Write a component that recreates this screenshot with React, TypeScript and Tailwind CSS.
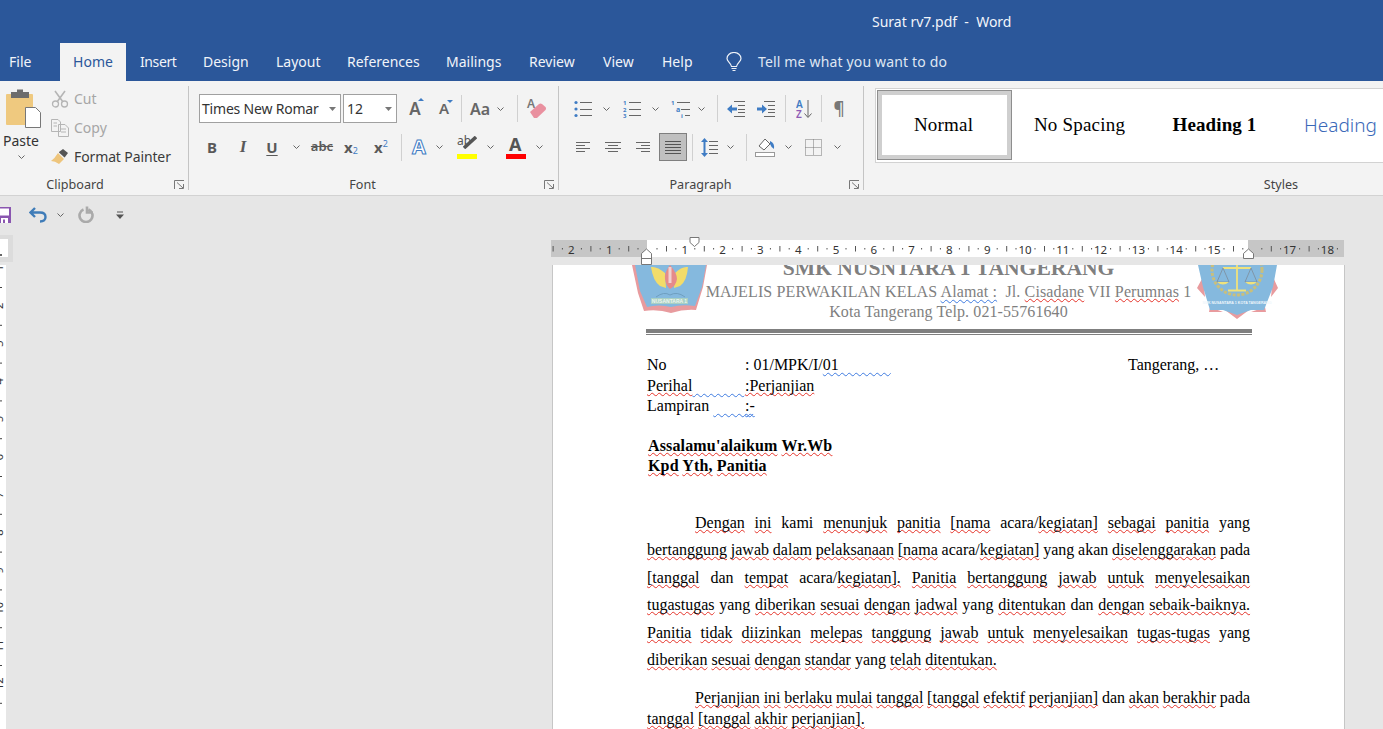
// App.tsx
import React from "react";

const RED = "underline decoration-wavy decoration-[#e5332a] decoration-[1.4px] underline-offset-[1px] [text-decoration-skip-ink:none]";
const BLUE = "underline decoration-wavy decoration-[#3f7be0] decoration-[1.4px] underline-offset-[2px] [text-decoration-skip-ink:none] whitespace-pre";

// the part of a word after ~ gets the red squiggle
function Words({ text }: { text: string }) {
  return (
    <>
      {text.split(" ").map((w, i) => {
        const at = w.indexOf("~");
        return (
          <React.Fragment key={i}>
            {i > 0 && " "}
            {at < 0 ? w : <>{w.slice(0, at)}<span className={RED}>{w.slice(at + 1)}</span></>}
          </React.Fragment>
        );
      })}
    </>
  );
}

const Chev = ({ className = "" }: { className?: string }) => (
  <svg width="9" height="6" viewBox="0 0 9 6" className={className}>
    <path d="M1.5 1.5 4.5 4.5 7.5 1.5" fill="none" stroke="#666" strokeWidth="1" />
  </svg>
);

const Sep = ({ className = "" }: { className?: string }) => (
  <div className={`h-[27px] w-px shrink-0 bg-[#d0d0d0] ${className}`} />
);

const Launcher = () => (
  <svg width="11" height="10" viewBox="0 0 11 10" className="absolute bottom-0 right-[3px]">
    <path d="M.5 9V.5H10M3 2.5 9 8M5 8.5H9.5V4" fill="none" stroke="#777" strokeWidth="1" />
  </svg>
);

function Group({ label, labelClass, className, children }: { label: string; labelClass: string; className: string; children: React.ReactNode }) {
  return (
    <div className={`relative flex h-[104px] shrink-0 flex-col border-r border-[#c4c4c4] ${className}`}>
      <div className="flex-1">{children}</div>
      <div className={`-mb-[4px] h-[18px] text-center text-[12.6px] leading-[18px] text-[#444] ${labelClass}`}>{label}</div>
    </div>
  );
}

const Lines = ({ d, w, h, color = "#666" }: { d: string; w: number; h: number; color?: string }) => (
  <svg width={w} height={h} viewBox={`0 0 ${w} ${h}`} className="shrink-0">
    <path d={d} fill="none" stroke={color} strokeWidth="1" />
  </svg>
);

function Ruler() {
  const nums = [-2, -1, 1, 2, 3, 4, 5, 6, 7, 8, 9, 10, 11, 12, 13, 14, 15, 17, 18];
  const o = 96; // x of ruler zero in this svg
  const step = 37.8;
  const ticks: React.ReactNode[] = [];
  for (let i = -3; i <= 19; i++) {
    const x = o + i * step;
    ticks.push(
      <g key={i} fill="#555">
        <rect x={x + 9.5} y={13} width={1} height={1.5} />
        <rect x={x + 19} y={11} width={1} height={5.5} />
        <rect x={x + 28.3} y={13} width={1} height={1.5} />
      </g>,
    );
  }
  return (
    <svg width="794" height="30" viewBox="0 0 794 30" className="block shrink-0">
      <rect x="0" y="5" width="793" height="17" fill="#c6c6c6" />
      <rect x="96" y="5" width="601" height="17" fill="#fff" />
      <clipPath id="rul">
        <rect x="0" y="5" width="793" height="17" />
      </clipPath>
      <g clipPath="url(#rul)">{ticks}</g>
      {nums.map((n) => (
        <text key={n} x={o + n * step} y={18.5} textAnchor="middle" fontSize="11.5" fontFamily="Noto Sans" fill="#333">
          {Math.abs(n)}
        </text>
      ))}
      <path d="M139 2.5H148V7.5L143.5 11.5 139 7.5Z" fill="#fff" stroke="#777" />
      <path d="M90.5 29.5V18.5L95.5 14 100.5 18.5V29.5ZM90.5 23.5H100.5" fill="#fff" stroke="#777" />
      <path d="M692.5 23.5V18.5L697.5 14 702.5 18.5V23.5Z" fill="#fff" stroke="#777" />
    </svg>
  );
}

function VRuler() {
  const n = [1, 2, 3, 4, 5, 6, 7, 8, 9, 10, 11, 12];
  return (
    <svg width="6" height="464" viewBox="0 0 6 464" className="block">
      {n.map((v, i) => (
        <g key={v}>
          <text x={0} y={0} transform={`translate(3 ${3 + i * 37.8}) rotate(-90)`} textAnchor="middle" fontSize="11" fontFamily="Noto Sans" fill="#333">
            {v}
          </text>
          <rect x="0" y={22 + i * 37.8} width="2" height="1" fill="#444" />
        </g>
      ))}
    </svg>
  );
}

const LogoLeft = () => (
  <svg width="78" height="50" viewBox="0 0 78 50" className="absolute left-[79px] top-0">
    <path d="M0 0H75L71 22 64 45Q52 44 39 48 26 44 12 46L6 28Z" fill="#e89b9e" />
    <path d="M3 0H74L70 22 63 41Q50 39 39 42 27 39 15 42L8 26Z" fill="#85b9de" />
    <path d="M33 8Q25 1 19 2 21 16 28 21L34 23ZM43 8Q50 1 56 2 55 16 48 21L42 23Z" fill="#f3dc6a" />
    <path d="M38 0Q32 8 33 14 34 21 38 24 44 21 45 14 45 8 38 0Z" fill="#e58b8b" />
    <path d="M36.5 2H39.5V18H36.5Z" fill="#f6f0f0" opacity=".7" />
    <path d="M24 32Q32 26 38 30 45 26 53 32" fill="none" stroke="#6f9fc0" />
    <rect x="19" y="33" width="37" height="6" fill="#a8d0c4" />
    <text x="37.5" y="38" textAnchor="middle" fontSize="5" fontWeight="700" fontFamily="Liberation Sans" fill="#eef6ee">
      NUSANTARA 1
    </text>
  </svg>
);

const LogoRight = () => (
  <svg width="84" height="56" viewBox="0 0 84 56" className="absolute left-[644px] top-0">
    <path d="M6 12 0 23 8 32ZM76 12 81 23 74 32ZM28 45 40 54 52 45ZM13 42 12 47 26 47ZM68 42 69 47 54 47Z" fill="#e89b9e" />
    <path d="M1 0H80L76 22 67 45H54L40 50 26 45H13L6 22Z" fill="#85b9de" />
    <circle cx="40" cy="5" r="25" fill="none" stroke="#c9bf7c" strokeWidth="3" strokeDasharray="3 1.5" />
    <path d="M40 0V25M31 25.5H49M26 3H54" stroke="#f0e27c" strokeWidth="1.8" fill="none" />
    <path d="M26 3 20 17H32ZM54 3 48 17H60Z" fill="none" stroke="#7d8d9a" strokeWidth=".8" />
    <path d="M20 17Q26 22 32 17ZM48 17Q54 22 60 17Z" fill="#f0e27c" />
    <text x="40" y="39" textAnchor="middle" fontSize="3.6" fontWeight="700" fontFamily="Liberation Sans" fill="#eef6fb">
      SMK NUSANTARA 1 KOTA TANGERANG
    </text>
  </svg>
);

const Cell = ({ className, children }: { className: string; children: React.ReactNode }) => (
  <div className={`flex shrink-0 items-center justify-center ${className}`}>{children}</div>
);

export default function App() {
  return (
    <div className="flex h-[729px] w-[1383px] flex-col overflow-hidden bg-[#e6e6e6] font-['Noto_Sans',sans-serif] text-[14px]">
      {/* Title bar */}
      <div className="h-[43px] shrink-0 bg-[#2b579a] pl-[872px] pt-[11px] text-[14px] leading-[22px] whitespace-pre text-[#f2f5fa]">
        Surat rv7.pdf  -  Word
      </div>

      {/* Tabs */}
      <div className="flex h-[38px] shrink-0 items-center bg-[#2b579a] text-[14px] leading-[38px] text-[#f1f4f9]">
        <div className="w-[60px] pl-[9px]">File</div>
        <div className="w-[66px] bg-[#f3f3f3] text-center text-[#2b579a]">Home</div>
        <div className="w-[63px] pl-[14px] tracking-[-.4px]">Insert</div>
        <div className="w-[73px] pl-[14px]">Design</div>
        <div className="w-[71px] pl-[14px]">Layout</div>
        <div className="w-[99px] pl-[14px]">References</div>
        <div className="w-[83px] pl-[14px]">Mailings</div>
        <div className="w-[74px] pl-[14px]">Review</div>
        <div className="w-[59px] pl-[14px]">View</div>
        <div className="w-[78px] pl-[14px]">Help</div>
        <svg width="16" height="20" viewBox="0 0 16 20" className="shrink-0">
          <path d="M5.5 14.5C5 11 1 9.5 1 6.5A7 6 0 0 1 15 6.5C15 9.5 11 11 10.5 14.5ZM5.5 16.5H10.5M6.5 18.5H9.5" fill="none" stroke="#eef2f8" strokeWidth="1.2" />
        </svg>
        <div className="ml-[16px] tracking-[.16px] text-[#dfe6f2]">Tell me what you want to do</div>
      </div>

      {/* Ribbon */}
      <div className="flex h-[115px] shrink-0 border-b border-[#d2d2d2] bg-[#f3f3f3] pt-[5px]">
        <Group label="Clipboard" labelClass="pr-[38px]" className="w-[189px]">
          <div className="flex">
            <div className="flex w-[46px] shrink-0 flex-col items-center pl-[2px] pt-[3px]">
              <svg width="36" height="39" viewBox="0 0 36 39" className="-ml-[3px] shrink-0">
                <rect x="1" y="5" width="27" height="31" rx="1" fill="#efc97f" />
                <path d="M6 3H12V0.5H18V3H24V9H6Z" fill="#6d6d6d" />
                <path d="M20.5 18.5H30.5L35.5 23.5V38.5H20.5Z" fill="#fff" stroke="#777" />
              </svg>
              <div className="-ml-[6px] mt-[3px] leading-[19px] text-[#333]">Paste</div>
              <Chev className="-ml-[6px] mt-[4px]" />
            </div>
            <div className="-mt-[2px] ml-[5px] flex flex-col">
              <div className="flex h-[29px] items-center text-[#a6a6a6]">
                <svg width="18" height="18" viewBox="0 0 18 18" className="mr-[5px]">
                  <path d="M4 1 12 12M14 1 6 12" stroke="#b5b5b5" strokeWidth="1.6" fill="none" />
                  <circle cx="4.5" cy="14" r="3" fill="none" stroke="#b5b5b5" strokeWidth="1.3" />
                  <circle cx="13.5" cy="14" r="3" fill="none" stroke="#b5b5b5" strokeWidth="1.3" />
                </svg>
                Cut
              </div>
              <div className="flex h-[29px] items-center text-[#a6a6a6]">
                <svg width="18" height="18" viewBox="0 0 18 18" className="mr-[5px]">
                  <path d="M.5 .5H7L9.5 3V12.5H.5ZM7.5 5.5H14L17.5 9V17.5H7.5ZM2.5 4H6M2.5 7H6M10 10H15M10 13H15" fill="#f3f3f3" stroke="#b5b5b5" />
                </svg>
                Copy
              </div>
              <div className="flex h-[29px] items-center tracking-[-.12px] text-[#3b3b3b]">
                <svg width="18" height="18" viewBox="0 0 18 18" className="mr-[5px]">
                  <path d="M7 5 13 11 8 16Q4 13 0 13 4 10 7 5Z" fill="#eec57c" />
                  <path d="M8 4 12 1 17 5 14 9 13.5 9.5 8 4.5Z" fill="#555" />
                </svg>
                Format Painter
              </div>
            </div>
          </div>
          <Launcher />
        </Group>

        <Group label="Font" labelClass="pr-[32px]" className="w-[370px] pl-[10px]">
          <div className="mt-[8px] flex h-[29px] items-center">
            <div className="flex h-[29px] w-[142px] shrink-0 items-center justify-between border border-[#a0a0a0] bg-white pl-[2px] pr-[4px] text-[#333]">
              <span className="whitespace-nowrap text-[14px] tracking-[-.2px]">Times New Romar</span>
              <svg width="7" height="4" viewBox="0 0 7 4" className="shrink-0"><path d="M0 0H7L3.5 4Z" fill="#777" /></svg>
            </div>
            <div className="ml-[2px] flex h-[29px] w-[54px] shrink-0 items-center justify-between border border-[#a0a0a0] bg-white pl-[3px] pr-[4px] text-[#333]">
              12
              <svg width="7" height="4" viewBox="0 0 7 4" className="shrink-0"><path d="M0 0H7L3.5 4Z" fill="#777" /></svg>
            </div>
            <Cell className="relative ml-[8px] w-[20px] text-[17px] font-semibold text-[#666]">
              A
              <svg width="6" height="3" viewBox="0 0 6 3" className="absolute right-[1px] top-[2px]"><path d="M0 3 3 0 6 3Z" fill="#3f7cc4" /></svg>
            </Cell>
            <Cell className="relative ml-[9px] w-[20px] text-[15px] font-semibold text-[#666]">
              A
              <svg width="6" height="3" viewBox="0 0 6 3" className="absolute right-[1px] top-[3px]"><path d="M0 0H6L3 3Z" fill="#3f7cc4" /></svg>
            </Cell>
            <Sep className="ml-[7px]" />
            <Cell className="ml-[6px] w-[24px] text-[16px] font-semibold text-[#666]">Aa</Cell>
            <Cell className="ml-[4px] w-[9px]"><Chev /></Cell>
            <Sep className="ml-[12px]" />
            <Cell className="ml-[8px] w-[20px]">
              <svg width="20" height="21" viewBox="0 0 20 21">
                <text x="1" y="10" fontSize="12" fontWeight="600" fontFamily="Noto Sans" fill="#777">A</text>
                <path d="M4 14 13 6Q14.5 5 16 6L19.5 9Q20.5 10.5 19.5 12L11 20H8Z" fill="#e9909f" />
              </svg>
            </Cell>
          </div>
          <div className="mt-[10px] flex h-[28px] items-center text-[#595959]">
            <Cell className="ml-[3px] w-[20px] text-[15px] font-bold">B</Cell>
            <Cell className="ml-[11px] w-[20px] font-['Liberation_Serif',serif] text-[17px] font-bold italic">I</Cell>
            <Cell className="ml-[9px] w-[20px] text-[15px] font-bold underline underline-offset-2">U</Cell>
            <Cell className="ml-[10px] w-[9px]"><Chev /></Cell>
            <Cell className="ml-[9px] w-[24px] text-[13px] font-semibold line-through">abc</Cell>
            <Cell className="ml-[7px] w-[20px] text-[15px] font-bold">
              x<span className="mt-[7px] text-[9px] font-normal text-[#3f7cc4]">2</span>
            </Cell>
            <Cell className="ml-[10px] w-[20px] text-[15px] font-bold">
              x<span className="-mt-[7px] text-[9px] font-normal text-[#3f7cc4]">2</span>
            </Cell>
            <Sep className="ml-[10px]" />
            <Cell className="ml-[7px] w-[20px] text-[20px] font-bold text-[#fff] [-webkit-text-stroke:1px_#3f7cc4]">A</Cell>
            <Cell className="ml-[6px] w-[9px]"><Chev /></Cell>
            <div className="relative ml-[13px] h-[24px] w-[20px] shrink-0">
              <span className="absolute -top-[3px] left-0 text-[12px] text-[#555]">ab</span>
              <svg width="14" height="13" viewBox="0 0 14 13" className="absolute right-0 top-[1px]"><path d="M1 12 13 1" stroke="#555" strokeWidth="3.5" /></svg>
              <div className="absolute bottom-0 h-[5px] w-[20px] bg-[#ffff00]" />
            </div>
            <Cell className="ml-[9px] w-[9px]"><Chev /></Cell>
            <div className="relative ml-[11px] h-[24px] w-[20px] shrink-0">
              <span className="absolute -top-[3px] left-[3px] text-[18px] font-bold leading-[24px] text-[#555]">A</span>
              <div className="absolute bottom-0 h-[5px] w-[20px] bg-[#ff0000]" />
            </div>
            <Cell className="ml-[9px] w-[9px]"><Chev /></Cell>
          </div>
          <Launcher />
        </Group>

        <Group label="Paragraph" labelClass="pr-[21px]" className="w-[305px]">
          <div className="mt-[8px] flex h-[29px] items-center">
            <div className="ml-[15px] shrink-0">
              <svg width="18" height="18" viewBox="0 0 18 18">
                <circle cx="2" cy="2.5" r="1.6" fill="#3f7cc4" /><circle cx="2" cy="9" r="1.6" fill="#3f7cc4" /><circle cx="2" cy="15.5" r="1.6" fill="#3f7cc4" />
                <path d="M6 2.5H18M6 9.5H18M6 15.5H18" stroke="#666" />
              </svg>
            </div>
            <Cell className="ml-[10px] w-[9px]"><Chev /></Cell>
            <div className="ml-[12px] shrink-0">
              <svg width="18" height="18" viewBox="0 0 18 18">
                <path d="M6 2.5H18M6 9.5H18M6 15.5H18" stroke="#666" />
                <text x="0" y="5" fontSize="6" fontWeight="700" fontFamily="Noto Sans" fill="#3f7cc4">1</text>
                <text x="0" y="12" fontSize="6" fontWeight="700" fontFamily="Noto Sans" fill="#3f7cc4">2</text>
                <text x="0" y="18" fontSize="6" fontWeight="700" fontFamily="Noto Sans" fill="#3f7cc4">3</text>
              </svg>
            </div>
            <Cell className="ml-[10px] w-[9px]"><Chev /></Cell>
            <div className="ml-[11px] shrink-0">
              <svg width="19" height="18" viewBox="0 0 19 18">
                <path d="M6 2.5H19M10 9.5H19M14 15.5H19" stroke="#666" />
                <text x="0" y="5" fontSize="6" fontWeight="700" fontFamily="Noto Sans" fill="#3f7cc4">1</text>
                <text x="5" y="12" fontSize="7" fontWeight="700" fontFamily="Noto Sans" fill="#3f7cc4">a</text>
                <text x="10" y="18" fontSize="6" fontWeight="700" fontFamily="Noto Sans" fill="#3f7cc4">i</text>
              </svg>
            </div>
            <Cell className="ml-[7px] w-[9px]"><Chev /></Cell>
            <Sep className="ml-[11px]" />
            <div className="ml-[9px] shrink-0">
              <svg width="18" height="16" viewBox="0 0 18 16">
                <path d="M7 .5H18M11 4.5H18M11 8.5H18M11 11.5H18M7 15.5H18" stroke="#666" />
                <path d="M0 8 5 3.5V6.5H10V9.5H5V12.5Z" fill="#3f7cc4" />
              </svg>
            </div>
            <div className="ml-[12px] shrink-0">
              <svg width="18" height="16" viewBox="0 0 18 16">
                <path d="M7 .5H18M11 4.5H18M11 8.5H18M11 11.5H18M7 15.5H18" stroke="#666" />
                <path d="M10 8 5 3.5V6.5H0V9.5H5V12.5Z" fill="#3f7cc4" />
              </svg>
            </div>
            <Sep className="ml-[10px]" />
            <div className="ml-[10px] shrink-0">
              <svg width="16" height="20" viewBox="0 0 16 20">
                <text x="0" y="9" fontSize="10" fontWeight="600" fontFamily="Noto Sans" fill="#3f7cc4">A</text>
                <text x="0" y="19" fontSize="10" fontWeight="600" fontFamily="Noto Sans" fill="#8e5bb5">Z</text>
                <path d="M12 1V18M8.5 14.5 12 18.5 15.5 14.5" fill="none" stroke="#666" />
              </svg>
            </div>
            <Sep className="ml-[9px]" />
            <Cell className="ml-[11px] w-[12px] text-[17px] font-semibold text-[#777]">¶</Cell>
          </div>
          <div className="mt-[10px] flex h-[28px] items-center">
            <div className="ml-[17px] shrink-0"><Lines w={14} h={11} d="M0 .5H14M0 3.5H9M0 6.5H14M0 9.5H9" /></div>
            <div className="ml-[15px] shrink-0"><Lines w={16} h={11} d="M0 .5H16M3 3.5H13M0 6.5H16M3 9.5H13" /></div>
            <div className="ml-[15px] shrink-0"><Lines w={14} h={11} d="M0 .5H14M5 3.5H14M0 6.5H14M5 9.5H14" /></div>
            <Cell className="ml-[9px] h-[28px] w-[28px] border border-[#7f7f7f] bg-[#c0c0c0]">
              <Lines w={16} h={13} d="M0 .5H16M0 3.5H16M0 6.5H16M0 9.5H16M0 12.5H16" color="#555" />
            </Cell>
            <Sep className="ml-[5px]" />
            <div className="ml-[8px] shrink-0">
              <svg width="17" height="19" viewBox="0 0 17 19">
                <path d="M8 3.5H17M8 7.5H17M8 11.5H17M8 15.5H17" stroke="#666" />
                <path d="M3.5 0 7 4H4.5V15H7L3.5 19 0 15H2.5V4H0Z" fill="#3f7cc4" />
              </svg>
            </div>
            <Cell className="ml-[8px] w-[9px]"><Chev /></Cell>
            <Sep className="ml-[11px]" />
            <div className="ml-[8px] shrink-0">
              <svg width="20" height="20" viewBox="0 0 20 20">
                <path d="M4 9 10 2 15 7 9 13Z" fill="#fff" stroke="#666" />
                <path d="M15 4Q20 6 19 12 16 10 15 7Z" fill="#3f7cc4" />
                <rect x=".5" y="15.5" width="19" height="4" fill="#fff" stroke="#999" />
              </svg>
            </div>
            <Cell className="ml-[9px] w-[9px]"><Chev /></Cell>
            <div className="ml-[12px] shrink-0">
              <svg width="17" height="17" viewBox="0 0 17 17">
                <path d="M.5 .5H16.5V16.5H.5ZM8.5 .5V16.5M.5 8.5H16.5" fill="none" stroke="#777" strokeDasharray="1 1" />
              </svg>
            </div>
            <Cell className="ml-[11px] w-[9px]"><Chev /></Cell>
          </div>
          <Launcher />
        </Group>

        <Group label="Styles" labelClass="pr-[10px]" className="w-[834px] pl-[11px]">
          <div className="mt-[2px] flex h-[75px] w-[823px] border border-[#d2d2d2] bg-white p-px">
            <div className="flex h-[70px] w-[135px] shrink-0 items-center justify-center border border-[#8e8e8e] bg-white pr-[2px] font-['Liberation_Serif',serif] text-[19px] tracking-[.2px] text-black outline-4 -outline-offset-5 outline-[#cfcfcf]">
              Normal
            </div>
            <div className="flex h-[70px] w-[135px] shrink-0 items-center justify-center font-['Liberation_Serif',serif] text-[19px] tracking-[.2px] text-black">No Spacing</div>
            <div className="flex h-[70px] w-[135px] shrink-0 items-center justify-center font-['Liberation_Serif',serif] text-[19px] font-bold tracking-[.1px] text-black">Heading 1</div>
            <div className="flex h-[70px] w-[135px] shrink-0 items-center justify-center pr-[18px] text-[19px] font-light text-[#3a68b8]">Heading</div>
          </div>
        </Group>
      </div>

      {/* Quick access toolbar */}
      <div className="flex h-[39px] shrink-0 items-center pb-[2px]">
        <svg width="11" height="16" viewBox="0 0 11 16" className="shrink-0">
          <path d="M0 0H11V16H0Z" fill="#8a56b0" />
          <path d="M0 1.5H9V8.5H0ZM1 11H8V16H5V12.5H3V16H1Z" fill="#fff" />
        </svg>
        <svg width="18" height="16" viewBox="0 0 18 16" className="ml-[18px] shrink-0">
          <path d="M6 1 1.5 5.5 6 10M2 5.5H11Q16.5 5.5 16.5 10 16.5 14.5 11 14.5" fill="none" stroke="#3f7cb8" strokeWidth="2.4" />
        </svg>
        <Cell className="ml-[9px] w-[9px]"><Chev /></Cell>
        <svg width="16" height="17" viewBox="0 0 16 17" className="ml-[13px] shrink-0">
          <path d="M5.5 3.5A6.5 6.5 0 1 0 10.5 3.5M9 .5V6.5H15" fill="none" stroke="#aaa" strokeWidth="2.6" />
        </svg>
        <svg width="8" height="8" viewBox="0 0 8 8" className="ml-[22px] shrink-0">
          <path d="M1 1H7" stroke="#555" />
          <path d="M0 3.5H8L4 8Z" fill="#555" />
        </svg>
      </div>

      {/* Document area */}
      <div className="flex min-h-0 flex-1">
        <div className="flex w-[13px] shrink-0 flex-col">
          <div className="h-[27px] bg-[#dcdcdc] pt-[4px]">
            <div className="relative h-[18px] w-[8px] bg-white">
              <div className="absolute bottom-[1px] left-0 h-[2px] w-[2px] bg-[#666]" />
            </div>
          </div>
          <div className="mt-[3px] w-[6px] flex-1 overflow-hidden bg-white">
            <VRuler />
          </div>
        </div>

        <div className="ml-[538px] flex w-[794px] shrink-0 flex-col">
          <Ruler />
          <div className="relative ml-px min-h-0 flex-1 overflow-hidden border-x border-[#c6c6c6] bg-white font-['Liberation_Serif',serif] text-[16px] text-black">
            <LogoLeft />
            <LogoRight />
            <div className="pl-[94px] pr-[94px]">
              {/* kop surat */}
              <div className="relative -mt-[9px] text-center text-[#7f7f7f]">
                <div className="text-[21.6px] font-bold leading-[24px]">SMK NUSNTARA 1 TANGERANG</div>
                <div className="mt-[2px] whitespace-pre text-[16px] leading-[20px] tracking-[.13px]">
                  MAJELIS PERWAKILAN KELAS <span className={BLUE}>Alamat :</span>{"  "}Jl. <span className={RED}>Cisadane</span> VII <span className={RED}>Perumnas</span> 1
                </div>
                <div className="text-[16px] leading-[20px] tracking-[.1px]">Kota Tangerang Telp. 021-55761640</div>
              </div>
              <div className="-ml-px mt-[7px] h-[6px] w-[606px] border-b border-t-4 border-[#7f7f7f]" />

              {/* nomor surat */}
              <div className="mt-[20px] text-[16px] leading-[20.6px]">
                <div className="flex">
                  <div className="w-[98px] shrink-0">No</div>
                  <div className="w-[383px] shrink-0 whitespace-pre">: 01/MPK/I/<span className={BLUE}>01             </span></div>
                  <div>Tangerang, …</div>
                </div>
                <div className="flex">
                  <div className="w-[98px] shrink-0 whitespace-pre"><span className={RED}>Perihal</span><span className={BLUE}>             </span></div>
                  <div><span className={RED}>:Perjanjian</span></div>
                </div>
                <div className="flex">
                  <div className="w-[98px] shrink-0 whitespace-pre">Lampiran <span className={BLUE}>          </span></div>
                  <div><span className={BLUE}>:-</span></div>
                </div>
              </div>

              <div className="mt-[19px] pl-px text-[16px] font-bold leading-[20.6px] tracking-[.15px]">
                <div><Words text="~Assalamu'alaikum ~Wr.Wb" /></div>
                <div><Words text="~Kpd ~Yth, ~Panitia" /></div>
              </div>

              {/* isi surat */}
              <div className="mt-[32px] text-[16px] leading-[27.4px]">
                <div className="pl-[48px] text-justify [text-align-last:justify] [word-spacing:-1px]"><Words text="~Dengan ~ini kami ~menunjuk ~panitia ~[nama acara/~kegiatan] ~sebagai ~panitia yang" /></div>
                <div className="text-justify [text-align-last:justify] [word-spacing:-1px]"><Words text="~bertanggung ~jawab ~dalam ~pelaksanaan ~[nama acara/~kegiatan] yang akan ~diselenggarakan pada" /></div>
                <div className="text-justify [text-align-last:justify] [word-spacing:-1px]"><Words text="~[tanggal dan ~tempat acara/~kegiatan]. ~Panitia ~bertanggung ~jawab ~untuk ~menyelesaikan" /></div>
                <div className="text-justify [text-align-last:justify] [word-spacing:-1px]"><Words text="~tugastugas yang ~diberikan ~sesuai ~dengan ~jadwal yang ~ditentukan dan ~dengan ~sebaik-baiknya." /></div>
                <div className="text-justify [text-align-last:justify] [word-spacing:-1px]"><Words text="~Panitia ~tidak ~diizinkan ~melepas ~tanggung ~jawab ~untuk ~menyelesaikan ~tugas-tugas yang" /></div>
                <div><Words text="~diberikan ~sesuai ~dengan ~standar yang ~telah ~ditentukan." /></div>
              </div>
              <div className="mt-[15px] text-[16px] leading-[20.6px]">
                <div className="pl-[48px] text-justify [text-align-last:justify] [word-spacing:-1px]"><Words text="~Perjanjian ~ini ~berlaku ~mulai ~tanggal ~[tanggal ~efektif ~perjanjian] dan ~akan ~berakhir pada" /></div>
                <div><Words text="~tanggal ~[tanggal ~akhir ~perjanjian]." /></div>
              </div>
            </div>
          </div>
        </div>
      </div>
    </div>
  );
}
